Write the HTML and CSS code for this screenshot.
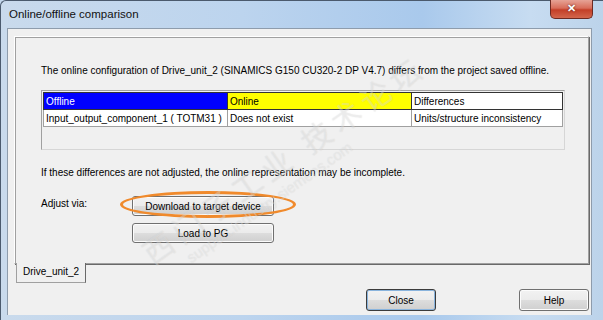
FILE: index.html
```html
<!DOCTYPE html>
<html lang="en">
<head>
  <meta charset="UTF-8">
  <title>Online/offline comparison</title>
  <link rel="stylesheet" href="styles.css">
</head>
<body>
  <div class="window">
    <div class="titlebar">
      <span class="title">Online/offline comparison</span>
      <span class="btn-x">&#x2715;</span>
    </div>
    <div class="client">
      <div class="panel">
        <div class="intro">The online configuration of Drive_unit_2 (SINAMICS G150 CU320-2 DP V4.7) differs from the project saved offline.</div>
        <div class="grid">
          <table class="diff">
            <colgroup>
              <col class="w-off">
              <col class="w-on">
              <col class="w-diff">
            </colgroup>
            <tr>
              <th class="col-off">Offline</th>
              <th class="col-on">Online</th>
              <th class="col-diff">Differences</th>
            </tr>
            <tr>
              <td>Input_output_component_1 ( TOTM31 )</td>
              <td>Does not exist</td>
              <td>Units/structure inconsistency</td>
            </tr>
          </table>
        </div>
        <div class="note">If these differences are not adjusted, the online representation may be incomplete.</div>
        <div class="adjust">
          <span class="adjust-label">Adjust via:</span>
          <div class="adjust-btns">
            <button class="btn btn-wide">Download to target device</button>
            <button class="btn btn-wide">Load to PG</button>
            <span class="mark"></span>
          </div>
        </div>
      </div>
      <div class="tabs">
        <span class="tab">Drive_unit_2</span>
      </div>
      <div class="footer">
        <button class="btn btn-close">Close</button>
        <button class="btn">Help</button>
      </div>
      <!-- watermark of the source site -->
      <div class="wm wm-cn">西门子工业 技术论坛</div>
      <div class="wm wm-en">support.industry.siemens.com</div>
    </div>
  </div>
</body>
</html>
```

FILE: styles.css
```css
/***----BASIC----***/
body {
  margin: 0;
  width: 603px;
  height: 320px;
  overflow: hidden;
  font-family: 'Liberation Sans', Arial, sans-serif;
  font-size: 10px;
  color: #000;
  background: #c3d7ec;
}
.window {
  height: 320px;
  display: flex;
  flex-direction: column;
  background: linear-gradient(90deg, #c9daec 0%, #bcd4ee 40%, #a9c9ec 70%, #c7dcf1 88%, #bcd3ea 100%);
  border-left: 1px solid #4b5a6d;
  border-top: 1px solid #4b5a6d;
  border-top-left-radius: 6px;
  box-sizing: border-box;
}

/***----Title Bar----***/
.titlebar {
  height: 27px;
  display: flex;
  justify-content: space-between;
  align-items: flex-start;
  padding: 0 10px 0 8px;
}
.title {
  font-size: 11.5px;
  margin-top: 7px;
  color: #111;
}
.btn-x {
  width: 41px;
  height: 18px;
  margin-top: -1px;
  border: 1px solid #6e2a22;
  border-top: none;
  border-radius: 0 0 5px 5px;
  background: linear-gradient(#e6a396 0%, #d86d5a 45%, #c33f28 55%, #d3664c 100%);
  color: #fff;
  font-size: 11px;
  font-weight: 700;
  text-align: center;
  line-height: 17px;
  text-shadow: 0 0 2px #4a0e05;
}

/***----Client Area----***/
.client {
  position: relative;
  width: 585px;
  height: 287px;
  margin-left: 6px;
  background: #f0f0f0;
  border: 1px solid #8e9cac;
  border-bottom: none;
  box-sizing: border-box;
  display: flex;
  flex-direction: column;
  padding: 7px 0 0 6px;
  overflow: hidden;
}
.panel {
  width: 575px;
  height: 228px;
  box-sizing: border-box;
  border: 1px solid #a0a0a0;
  border-left-color: #fff;
  border-top-color: #fff;
  box-shadow: inset 1px 1px 0 #a0a0a0, 1px 1px 0 #696969;
  padding: 27px 0 0 26px;
  display: flex;
  flex-direction: column;
  position: relative;
}
.intro {
  line-height: 13px;
  white-space: nowrap;
}

/***----Table----***/
.grid {
  margin-top: 13px;
  width: 524px;
  height: 60px;
  box-sizing: border-box;
  border: 1px solid #d6d6d6;
  border-left-color: #a0a0a0;
  border-top-color: #a0a0a0;
  padding: 1px;
}
.diff {
  border-collapse: collapse;
  table-layout: fixed;
  width: 519px;
  font-size: 10px;
}
.w-off { width: 184px; }
.w-on { width: 184px; }
.w-diff { width: 151px; }
.diff th,
.diff td {
  height: 16px;
  padding: 0 2px;
  text-align: left;
  font-weight: 400;
  white-space: nowrap;
  overflow: hidden;
}
.diff th {
  border: 1px solid #333;
}
.diff td {
  border: 1px solid #a0a0a0;
  background: #fff;
}
.col-off {
  background: #0000ff;
  color: #fff;
}
.col-on {
  background: #ffff00;
}
.col-diff {
  background: #fff;
}

.note {
  margin-top: 16px;
  line-height: 13px;
  white-space: nowrap;
}

/***----Adjust----***/
.adjust {
  margin-top: 17px;
  display: flex;
}
.adjust-label {
  width: 91px;
  line-height: 15px;
}
.adjust-btns {
  display: flex;
  flex-direction: column;
  gap: 7px;
  position: relative;
}
.mark {
  position: absolute;
  left: -12px;
  top: -5px;
  width: 170px;
  height: 21px;
  border: 3px solid #f08a2c;
  border-radius: 50%;
}

/***----Buttons----***/
.btn {
  width: 70px;
  height: 22px;
  padding: 0;
  font-family: inherit;
  font-size: 10px;
  color: #000;
  border: 1px solid #707070;
  border-radius: 3px;
  background: linear-gradient(#f2f2f2 0%, #ebebeb 50%, #dddddd 51%, #cfcfcf 100%);
  box-shadow: inset 0 0 0 1px #fcfcfc;
}
.btn-wide {
  width: 142px;
  height: 20px;
}
.btn-close {
  border: 1px solid #3c3c3c;
  box-shadow: inset 0 0 0 1px #8ab4dd;
}

/***----Tab----***/
.tabs {
  display: flex;
  padding-left: 2px;
}
.tab {
  margin-top: -1px;
  width: 70px;
  height: 20px;
  box-sizing: border-box;
  background: #f0f0f0;
  border: 1px solid #a0a0a0;
  border-top: none;
  border-right-color: #696969;
  padding: 3px 0 0 6px;
  position: relative;
}
.footer {
  display: flex;
  justify-content: flex-end;
  gap: 83px;
  margin-top: 6px;
  width: 575px;
}

/***----Watermark----***/
.wm {
  position: absolute;
  pointer-events: none;
  white-space: nowrap;
  transform: rotate(-35deg);
  transform-origin: left bottom;
  color: rgba(255, 255, 255, 0.3);
  text-shadow: 0 0 1px rgba(120, 120, 120, 0.2);
}
.wm-cn {
  left: 150px;
  top: 200px;
  font-family: 'Noto Sans CJK SC', sans-serif;
  font-size: 30px;
  letter-spacing: 6px;
}
.wm-en {
  left: 185px;
  top: 220px;
  font-size: 15px;
}
```
